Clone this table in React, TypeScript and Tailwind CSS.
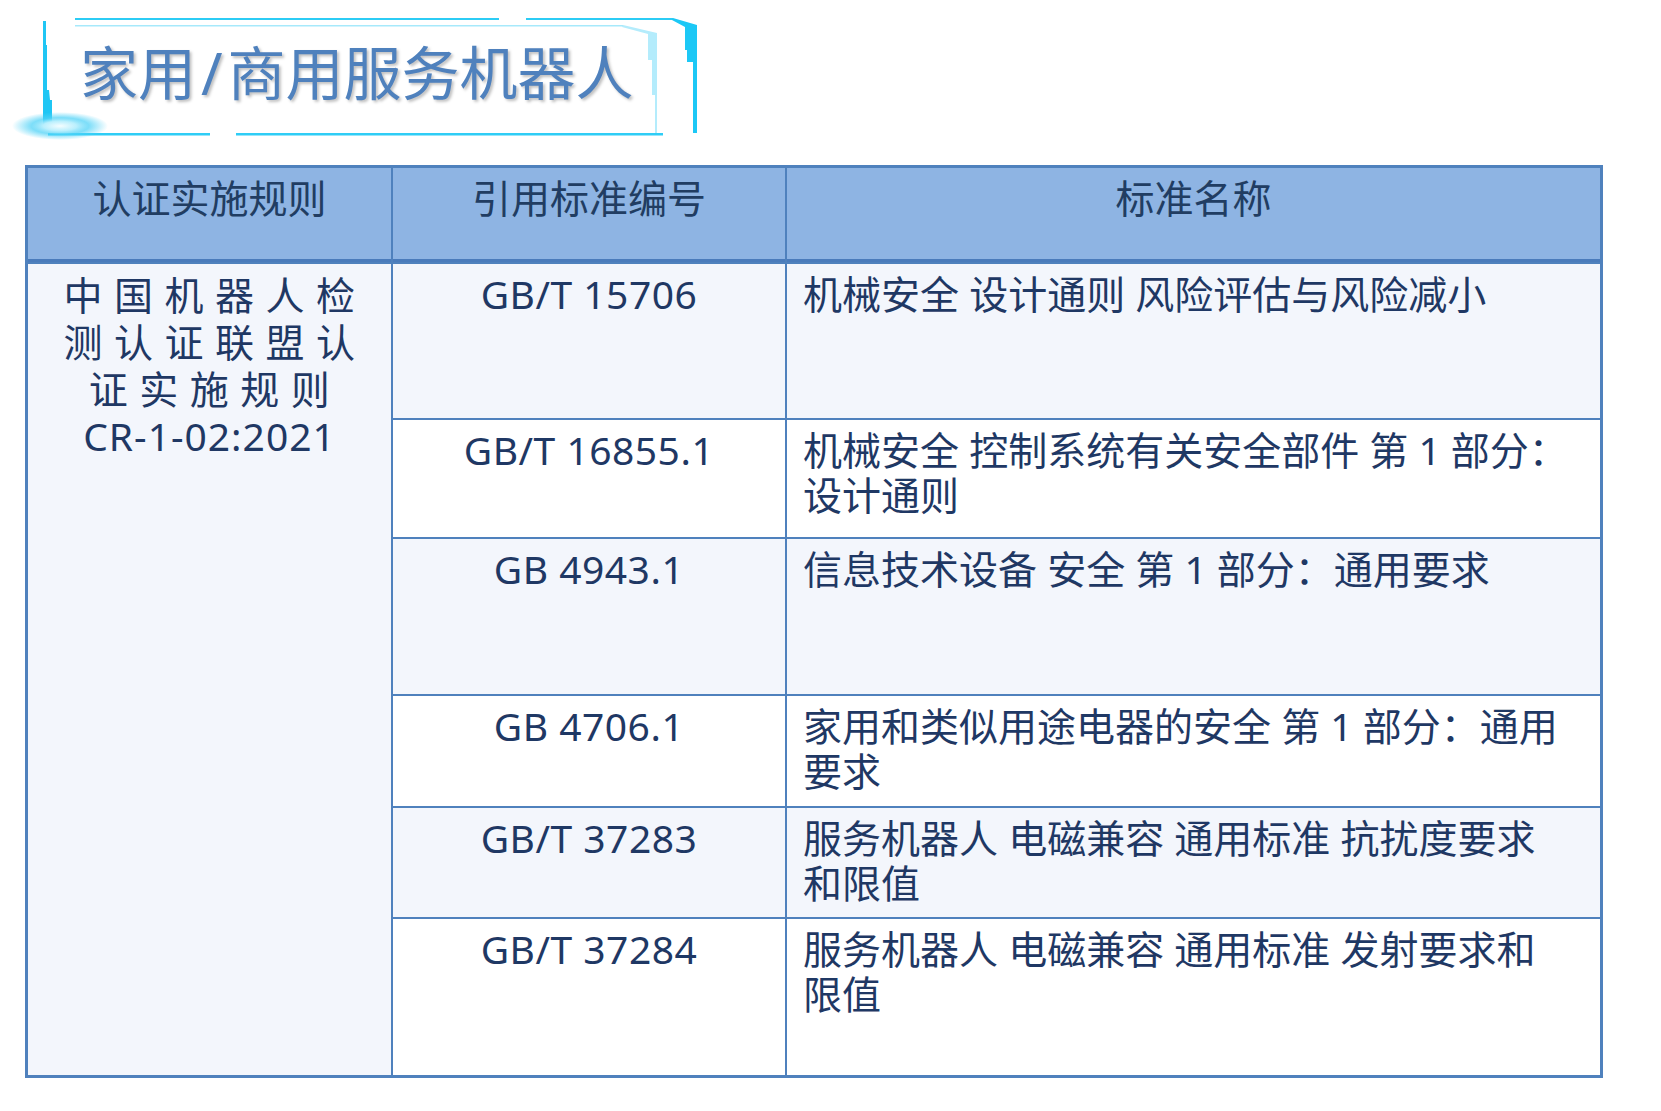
import React from 'react';

const FONT = "font-['Noto_Sans','Noto_Sans_CJK_SC',sans-serif]";

type Row = { code: string; name: string[]; light: boolean };

const ROWS: Row[] = [
  { code: 'GB/T 15706', name: ['机械安全 设计通则 风险评估与风险减小'], light: true },
  { code: 'GB/T 16855.1', name: ['机械安全 控制系统有关安全部件 第 1 部分：', '设计通则'], light: false },
  { code: 'GB 4943.1', name: ['信息技术设备 安全 第 1 部分：通用要求'], light: true },
  { code: 'GB 4706.1', name: ['家用和类似用途电器的安全 第 1 部分：通用', '要求'], light: false },
  { code: 'GB/T 37283', name: ['服务机器人 电磁兼容 通用标准 抗扰度要求', '和限值'], light: true },
  { code: 'GB/T 37284', name: ['服务机器人 电磁兼容 通用标准 发射要求和', '限值'], light: false },
];

const TitleFrame = () => (
  <svg className="absolute left-0 top-0" width="720" height="160" viewBox="0 0 720 160" fill="none">
    <defs>
      <radialGradient id="glow" cx="0.5" cy="0.5" r="0.5">
        <stop offset="0" stopColor="#f4fdff" />
        <stop offset="0.35" stopColor="#b9effd" />
        <stop offset="0.6" stopColor="#52d3f7" stopOpacity="0.75" />
        <stop offset="1" stopColor="#52d3f7" stopOpacity="0" />
      </radialGradient>
    </defs>
    {/* outer frame */}
    <polygon points="43,21 46,21 46,45 47,45 47,90 49,90 50,100 52,100 52,127 43,127" fill="#1fc6f4" />
    <rect x="75" y="18" width="424" height="2" fill="#2cccf5" />
    <rect x="526" y="18" width="147" height="2" fill="#2cccf5" />
    <polygon points="673,18 697,25 697,133 693,133 693,62 687,62 687,50 685,50 685,27 672,20" fill="#1cc8f6" />
    <rect x="48" y="133" width="162" height="2.5" fill="#2fcdf6" />
    <rect x="236" y="133" width="427" height="2.5" fill="#2fcdf6" />
    {/* inner frame */}
    <rect x="75" y="25" width="548" height="1.5" fill="#a7e9fb" />
    <polygon points="623,25 657,33 657,133 655,133 655,95 652,95 652,60 648,60 648,34 622,27" fill="#b4ecfc" />
    <ellipse cx="60" cy="126" rx="48" ry="14" fill="url(#glow)" />
  </svg>
);

const App = () => {
  return (
    <div className={`relative h-[1111px] w-[1661px] overflow-hidden bg-white ${FONT}`}>
      <div className="relative h-[165px]">
        <TitleFrame />
        <h1 className="relative pl-[80px] pt-[44px] text-[58px] leading-[58px] font-normal text-[#4f81bd] [text-shadow:2px_2px_3px_rgba(0,0,0,0.25)]">
          家用<span className="mx-[5px]">/</span>商用服务机器人
        </h1>
      </div>

      <div className="ml-[25px] grid w-[1578px] grid-cols-[363px_392px_813px] grid-rows-[94px_154px_117px_155px_110px_109px_156px] gap-[2px] bg-[#4f81bd] p-[3px] text-[39px] leading-[45px] text-[#1f3864]">
        {['认证实施规则', '引用标准编号', '标准名称'].map((h) => (
          <div key={h} className="border-b-[3px] border-[#4a7bbb] bg-[#8eb4e3] pt-[7px] text-center text-[#213d62]">
            {h}
          </div>
        ))}

        <div className="col-start-1 row-span-6 row-start-2 bg-[#f3f6fc] pt-[7px] text-center leading-[47px]">
          <div className="pl-[11px] tracking-[11.5px]">中国机器人检</div>
          <div className="pl-[11px] tracking-[11.5px]">测认证联盟认</div>
          <div className="pl-[11px] tracking-[11.5px]">证实施规则</div>
          <div className="tracking-[1px]">CR-1-02:2021</div>
        </div>

        {ROWS.map((r) => (
          <React.Fragment key={r.code}>
            <div className={`${r.light ? 'bg-[#f3f6fc]' : 'bg-white'} pt-[7px] text-center tracking-[0.5px]`}>{r.code}</div>
            <div className={`${r.light ? 'bg-[#f3f6fc]' : 'bg-white'} pl-[16px] pt-[7px]`}>
              {r.name.map((line) => (
                <div key={line} className="whitespace-nowrap">{line}</div>
              ))}
            </div>
          </React.Fragment>
        ))}
      </div>
    </div>
  );
};

export default App;
